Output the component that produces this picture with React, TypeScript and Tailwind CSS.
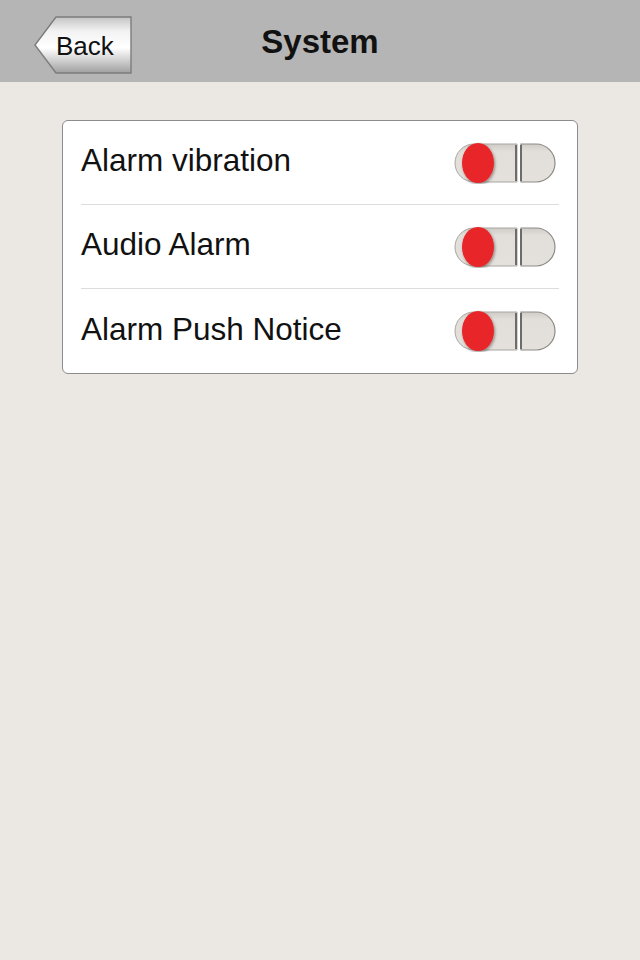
const rows = ["Alarm vibration", "Audio Alarm", "Alarm Push Notice"];

function Toggle() {
  return (
    <div className="relative h-[42px] w-[102px] shrink-0">
      <svg width="102" height="42" viewBox="0 0 102 42" className="absolute inset-0">
        <defs>
          <filter id="knobShadow" x="-30%" y="-30%" width="160%" height="160%">
            <feDropShadow dx="1" dy="1.5" stdDeviation="1.5" floodColor="#000" floodOpacity="0.4" />
          </filter>
          <linearGradient id="pillGrad" x1="0" y1="0" x2="0" y2="1">
            <stop offset="0" stopColor="#cfcbc6" />
            <stop offset="0.2" stopColor="#e2ded9" />
            <stop offset="1" stopColor="#e4e0db" />
          </linearGradient>
        </defs>
        <path d="M20 2 H63 V40 H20 A19 19 0 0 1 20 2 Z" fill="url(#pillGrad)" stroke="#a9a6a2" strokeWidth="1" />
        <line x1="62" y1="3" x2="62" y2="39" stroke="#6e6c6a" strokeWidth="2" />
        <path d="M67 2 H82 A19 19 0 0 1 82 40 H67 Z" fill="url(#pillGrad)" stroke="#8f8c88" strokeWidth="1.2" />
        <line x1="67" y1="3" x2="67" y2="39" stroke="#6e6c6a" strokeWidth="2" />
        <ellipse cx="24" cy="21" rx="16" ry="20" fill="#e8262a" filter="url(#knobShadow)" />
      </svg>
    </div>
  );
}

function BackButton() {
  return (
    <div className="relative flex h-[58px] w-[100px] items-center">
      <svg width="100" height="58" viewBox="0 0 100 58" className="absolute inset-0">
        <defs>
          <linearGradient id="backGrad" x1="0" y1="0" x2="0" y2="1">
            <stop offset="0" stopColor="#c4c4c4" />
            <stop offset="0.25" stopColor="#f2f2f2" />
            <stop offset="0.55" stopColor="#ffffff" />
            <stop offset="1" stopColor="#a0a0a0" />
          </linearGradient>
        </defs>
        <path d="M22 1 H97 V57 H22 L1 29 Z" fill="url(#backGrad)" stroke="#7c7c7c" strokeWidth="1.4" />
      </svg>
      <span className="relative pl-[22px] pt-[2px] text-[26px] text-[#111]">Back</span>
    </div>
  );
}

export default function App() {
  return (
    <main className="flex min-h-[960px] flex-col bg-[#ebe7e2] [font-family:'Liberation_Sans',Arial,sans-serif]">
      <header className="relative flex h-[82px] items-center justify-center bg-[#b5b5b5]">
        <div className="absolute left-[34px] top-[16px]">
          <BackButton />
        </div>
        <h1 className="pt-[2px] text-[33px] font-bold text-[#111]">System</h1>
      </header>

      <div className="px-[62px] pt-[38px]">
        <div className="w-[516px] rounded-[6px] border border-[#8c8c8c] bg-white px-[18px]">
          {rows.map((label, i) => (
            <div
              key={label}
              className={`flex h-[84px] items-center justify-between pr-[3px] ${
                i < rows.length - 1 ? "border-b border-[#dcdcdc]" : ""
              }`}
            >
              <span className="pb-[3px] text-[31.5px] text-[#111]">{label}</span>
              <Toggle />
            </div>
          ))}
        </div>
      </div>
    </main>
  );
}
